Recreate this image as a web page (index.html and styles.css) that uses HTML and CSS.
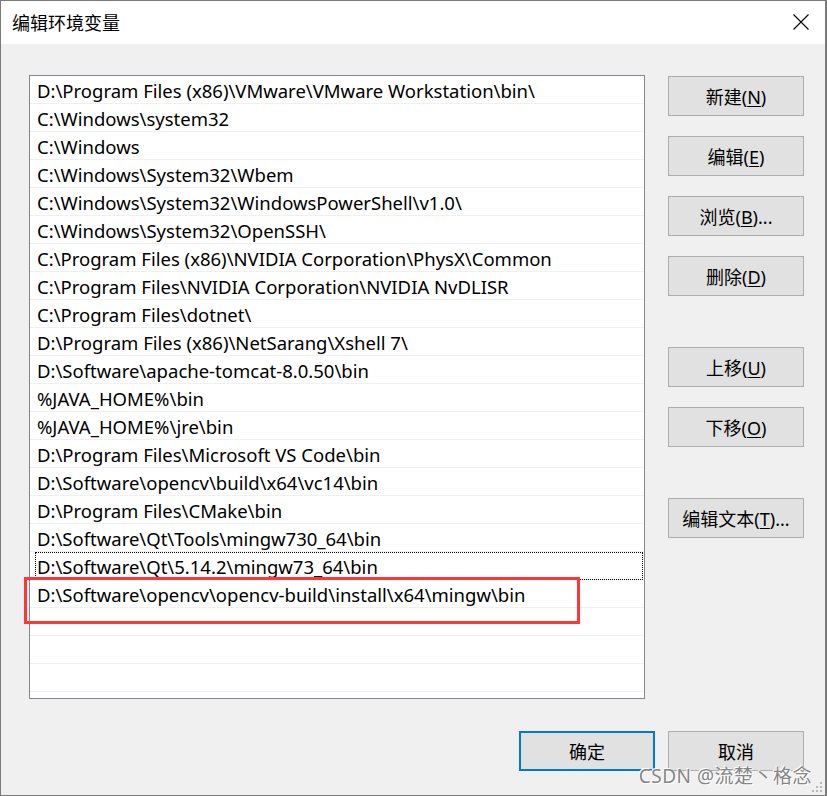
FILE: index.html
```html
<!DOCTYPE html>
<html lang="zh-CN">
<head>
    <meta charset="UTF-8">
    <meta name="viewport" content="width=device-width, initial-scale=1.0">
    <title>编辑环境变量</title>
    <link rel="stylesheet" href="styles.css">
</head>
<body>
    <div class="window">
        <div class="titlebar">
            <span class="title">编辑环境变量</span>
            <svg class="close" width="16" height="16" viewBox="0 0 16 16">
                <path d="M0.5 0.5 L15.5 15.5 M15.5 0.5 L0.5 15.5" stroke="#000" stroke-width="1.1" fill="none"/>
            </svg>
        </div>

        <div class="content">
            <div class="main">
                <div class="list">
                    <div class="row">D:\Program Files (x86)\VMware\VMware Workstation\bin\</div>
                    <div class="row">C:\Windows\system32</div>
                    <div class="row">C:\Windows</div>
                    <div class="row">C:\Windows\System32\Wbem</div>
                    <div class="row">C:\Windows\System32\WindowsPowerShell\v1.0\</div>
                    <div class="row">C:\Windows\System32\OpenSSH\</div>
                    <div class="row">C:\Program Files (x86)\NVIDIA Corporation\PhysX\Common</div>
                    <div class="row">C:\Program Files\NVIDIA Corporation\NVIDIA NvDLISR</div>
                    <div class="row">C:\Program Files\dotnet\</div>
                    <div class="row">D:\Program Files (x86)\NetSarang\Xshell 7\</div>
                    <div class="row">D:\Software\apache-tomcat-8.0.50\bin</div>
                    <div class="row">%JAVA_HOME%\bin</div>
                    <div class="row">%JAVA_HOME%\jre\bin</div>
                    <div class="row">D:\Program Files\Microsoft VS Code\bin</div>
                    <div class="row">D:\Software\opencv\build\x64\vc14\bin</div>
                    <div class="row">D:\Program Files\CMake\bin</div>
                    <div class="row">D:\Software\Qt\Tools\mingw730_64\bin</div>
                    <div class="row focused">D:\Software\Qt\5.14.2\mingw73_64\bin</div>
                    <div class="row">D:\Software\opencv\opencv-build\install\x64\mingw\bin</div>
                    <div class="row"></div>
                    <div class="row"></div>
                    <div class="row"></div>
                    <div class="row"></div>
                </div>

                <div class="actions">
                    <button class="btn">新建(<u>N</u>)</button>
                    <button class="btn">编辑(<u>E</u>)</button>
                    <button class="btn">浏览(<u>B</u>)...</button>
                    <button class="btn">删除(<u>D</u>)</button>
                    <button class="btn group">上移(<u>U</u>)</button>
                    <button class="btn">下移(<u>O</u>)</button>
                    <button class="btn group">编辑文本(<u>T</u>)...</button>
                </div>
            </div>

            <div class="footer">
                <button class="btn default">确定</button>
                <button class="btn">取消</button>
            </div>
        </div>

        <!-- red marker drawn over the newly added path -->
        <div class="highlight"></div>

        <div class="watermark">CSDN @流楚丶格念</div>
        <svg class="grip" width="10" height="10" viewBox="0 0 10 10">
            <rect x="8" y="0" width="2" height="2" fill="#b8b8b8"/>
            <rect x="4" y="4" width="2" height="2" fill="#b8b8b8"/>
            <rect x="8" y="4" width="2" height="2" fill="#b8b8b8"/>
            <rect x="0" y="8" width="2" height="2" fill="#b8b8b8"/>
            <rect x="4" y="8" width="2" height="2" fill="#b8b8b8"/>
            <rect x="8" y="8" width="2" height="2" fill="#b8b8b8"/>
        </svg>
    </div>
</body>
</html>
```

FILE: styles.css
```css
body {
    margin: 0;
    font-family: "Noto Sans", "Noto Sans CJK SC", sans-serif;
    color: #000;
}
.window {
    position: relative;
    width: 827px;
    height: 796px;
    box-sizing: border-box;
    border: 1px solid #7a7a7a;
    border-right-width: 2px;
    background-color: #f0f0f0;
    overflow: hidden;
}
.titlebar {
    height: 43px;
    background-color: #fff;
    display: flex;
    align-items: center;
    justify-content: space-between;
    padding: 0 16px 0 11px;
}
.title {
    font-size: 18px;
    margin-top: -2px;
}
.close {
    margin-top: -2px;
}
.content {
    padding: 31px 0 0 28px;
}
.main {
    display: flex;
    gap: 23px;
}
.list {
    width: 616px;
    height: 624px;
    box-sizing: border-box;
    border: 1px solid #828790;
    background-color: #fff;
    overflow: hidden;
}
.row {
    height: 28px;
    box-sizing: border-box;
    border-bottom: 1px solid #f0f0f0;
    padding: 2px 0 0 7px;
    font-size: 18.5px;
    line-height: 26px;
    white-space: nowrap;
}
.row.focused {
    outline: 1px dotted #000;
    outline-offset: -1px;
    margin: 0 1px 0 5px;
    padding-left: 2px;
}
.highlight {
    position: absolute;
    left: 23px;
    top: 576px;
    width: 550px;
    height: 41px;
    border: 3px solid #ff3636;
}
.actions {
    display: flex;
    flex-direction: column;
    gap: 20px;
    padding-top: 1px;
}
.btn {
    width: 136px;
    height: 40px;
    box-sizing: border-box;
    border: 1px solid #adadad;
    background-color: #e1e1e1;
    font-family: "Noto Sans", "Noto Sans CJK SC", sans-serif;
    font-size: 18px;
    color: #000;
    padding: 0 0 1px;
}
.btn u {
    text-underline-offset: 2px;
}
.actions .group {
    margin-top: 31px;
}
.footer {
    display: flex;
    justify-content: flex-end;
    gap: 13px;
    margin-top: 32px;
    padding-right: 21px;
}
.btn.default {
    border: 2px solid #0078d7;
}
.watermark {
    position: absolute;
    right: 13px;
    bottom: 6px;
    font-size: 19px;
    color: #858585;
    text-shadow: 1px 1px 0 #fff, -1px -1px 0 #fff;
    letter-spacing: 0.5px;
}
.grip {
    position: absolute;
    right: 3px;
    bottom: 3px;
}
```
